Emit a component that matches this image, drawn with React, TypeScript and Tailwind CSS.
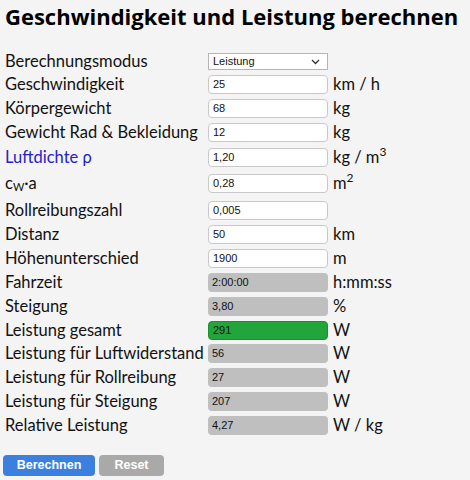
import React from 'react';

type Row = {
  label: React.ReactNode;
  value: string;
  unit?: React.ReactNode;
  kind: 'input' | 'out' | 'green';
  h: string;
};

const rows: Row[] = [
  { label: 'Geschwindigkeit', value: '25', unit: 'km / h', kind: 'input', h: 'h-[24px]' },
  { label: 'Körpergewicht', value: '68', unit: 'kg', kind: 'input', h: 'h-[24px]' },
  { label: 'Gewicht Rad & Bekleidung', value: '12', unit: 'kg', kind: 'input', h: 'h-[25px]' },
  {
    label: <span className="text-[#2323c4]">Luftdichte ρ</span>,
    value: '1,20',
    unit: (
      <span>
        kg / m<sup className="text-[12px] relative -top-[7px]">3</sup>
      </span>
    ),
    kind: 'input',
    h: 'h-[26px]',
  },
  {
    label: (
      <span>
        c<sub className="text-[11px] relative top-[2px]">W</sub>·a
      </span>
    ),
    value: '0,28',
    unit: (
      <span>
        m<sup className="text-[12px] relative -top-[7px]">2</sup>
      </span>
    ),
    kind: 'input',
    h: 'h-[27px]',
  },
  { label: 'Rollreibungszahl', value: '0,005', kind: 'input', h: 'h-[24px]' },
  { label: 'Distanz', value: '50', unit: 'km', kind: 'input', h: 'h-[24px]' },
  { label: 'Höhenunterschied', value: '1900', unit: 'm', kind: 'input', h: 'h-[24px]' },
  { label: 'Fahrzeit', value: '2:00:00', unit: 'h:mm:ss', kind: 'out', h: 'h-[24px]' },
  { label: 'Steigung', value: '3,80', unit: '%', kind: 'out', h: 'h-[24px]' },
  { label: 'Leistung gesamt', value: '291', unit: 'W', kind: 'green', h: 'h-[23px]' },
  { label: 'Leistung für Luftwiderstand', value: '56', unit: 'W', kind: 'out', h: 'h-[24px]' },
  { label: 'Leistung für Rollreibung', value: '27', unit: 'W', kind: 'out', h: 'h-[24px]' },
  { label: 'Leistung für Steigung', value: '207', unit: 'W', kind: 'out', h: 'h-[24px]' },
  { label: 'Relative Leistung', value: '4,27', unit: 'W / kg', kind: 'out', h: 'h-[24px]' },
];

const boxBase =
  "w-[120px] h-[19px] rounded-[4px] px-[4px] flex items-center text-[11px] text-[#111] font-['Liberation_Sans',sans-serif]";

function Field({ value, kind }: { value: string; kind: Row['kind'] }) {
  if (kind === 'input') {
    return <div className={`${boxBase} bg-white border border-[#c9c9c9]`}>{value}</div>;
  }
  if (kind === 'green') {
    return <div className={`${boxBase} bg-[#22a53b] border border-[#1b8f31]`}>{value}</div>;
  }
  return <div className={`${boxBase} bg-[#bfbfbf]`}>{value}</div>;
}

export default function App() {
  return (
    <div className="w-[470px] h-[480px] bg-[#f4f4f4] text-[#111] font-['Lato',sans-serif] overflow-hidden">
      <h1 className="px-[5px] pt-[2px] text-[22px] leading-[28px] font-bold text-black font-['Open_Sans',sans-serif] whitespace-nowrap">
        Geschwindigkeit und Leistung berechnen
      </h1>

      <div className="mt-[23px] flex flex-col text-[16.5px]">
        <div className="flex items-start h-[22px]">
          <div className="w-[208px] pl-[5px] leading-[18px] -mt-[1px]">Berechnungsmodus</div>
          <div className="w-[120px] h-[17px] bg-white border border-[#b5b5b5] flex items-center justify-between px-[4px] text-[11px] font-['Liberation_Sans',sans-serif]">
            <span>Leistung</span>
            <svg width="9" height="6" viewBox="0 0 9 6" className="mr-[3px]">
              <path d="M1 1l3.5 3.5L8 1" stroke="#333" strokeWidth="1.3" fill="none" />
            </svg>
          </div>
        </div>

        {rows.map((r, i) => (
          <div key={i} className={`flex items-start ${r.h}`}>
            <div className="w-[208px] pl-[5px] leading-[19px] h-[19px] whitespace-nowrap">{r.label}</div>
            <Field value={r.value} kind={r.kind} />
            <div className="pl-[5px] leading-[19px] h-[19px] whitespace-nowrap">{r.unit}</div>
          </div>
        ))}
      </div>

      <div className="mt-[15px] flex gap-[4px] pl-[3px]">
        <button className="w-[92px] h-[21px] rounded-[4px] bg-[#3b80de] text-white text-[12.5px] font-bold font-['Liberation_Sans',sans-serif]">
          Berechnen
        </button>
        <button className="w-[65px] h-[21px] rounded-[4px] bg-[#a9a9a9] text-white text-[12.5px] font-bold font-['Liberation_Sans',sans-serif]">
          Reset
        </button>
      </div>
    </div>
  );
}
